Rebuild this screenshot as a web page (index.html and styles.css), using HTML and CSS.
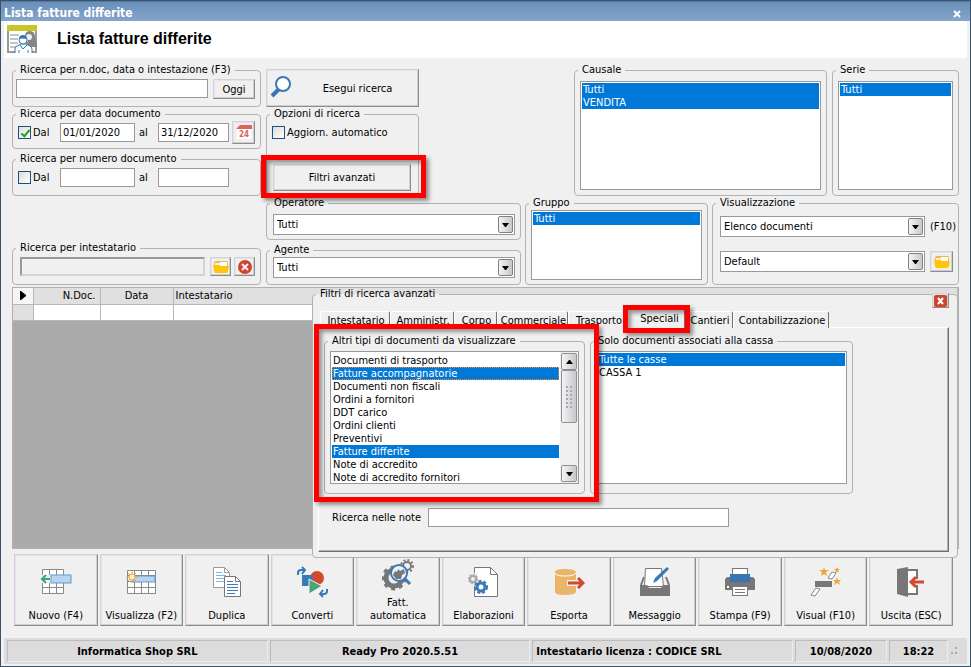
FILE: index.html
```html
<!DOCTYPE html>
<html lang="it">
<head>
    <meta charset="UTF-8">
    <meta name="viewport" content="width=device-width, initial-scale=1.0">
    <title>Lista fatture differite</title>
    <link rel="stylesheet" href="styles.css">
</head>
<body>
    <svg width="0" height="0" class="defs">
        <symbol id="folder" viewBox="0 0 16 14">
            <path fill="#f2b54c" d="M1 4q0-3 2-3h11q1 0 1 3v3H1z"/>
            <path fill="#fff4d8" d="M2 3h12v3H2z"/>
            <path fill="#fff" d="M7 2h7v4H7z"/>
            <path fill="#ffc40c" d="M0 5h6l2 1h8l-1 5q0 2-3 2H4q-3 0-3-2z"/>
        </symbol>
        <symbol id="arrow" viewBox="0 0 7 4">
            <path d="M0 0h7L4 4H3z"/>
        </symbol>
    </svg>

    <div class="window">
        <div class="titlebar">
            <span>Lista fatture differite</span>
            <button type="button" class="close-window" aria-label="Chiudi">
                <svg width="8" height="8" viewBox="0 0 8 8"><path d="M1 1l6 6M7 1L1 7" stroke="#fff" stroke-width="2"/></svg>
            </button>
        </div>
        <div class="header">
            <svg width="30" height="29" viewBox="0 0 30 29">
                <rect x="1" y="1" width="28" height="26" fill="#fff" stroke="#999" stroke-width="2"/>
                <rect width="30" height="6" fill="#c8c72a"/>
                <path d="M3 10h9M3 14h8M3 18h8M3 22h6" stroke="#c4c4c4" stroke-width="2"/>
                <path fill="#858585" d="M18 11q0-5 5-5t5 6q0 3 2 6v4h-8l-3-4 2-2z"/>
                <circle cx="22" cy="12" r="3" fill="#eee"/>
                <path fill="#fff" stroke="#3c78b4" stroke-width="1" d="M8 28v-4q0-3 4-4l2-1h5l2 1q4 1 4 4v4M13 20l3 4 4-4M12 28v-3M21 28v-3"/>
                <ellipse cx="16" cy="15" rx="4" ry="4" fill="#fff" stroke="#3c78b4"/>
                <path fill="#3c78b4" d="M12 14q0-4 4-4t4 4q-4-1-8 0z"/>
            </svg>
            <h1>Lista fatture differite</h1>
        </div>

        <!-- filtri di ricerca -->
        <form class="filters">
            <div class="col-search">
                <fieldset class="search-doc">
                    <legend>Ricerca per n.doc, data o intestazione (F3)</legend>
                    <input type="text" class="grow" aria-label="Ricerca per n.doc, data o intestazione">
                    <button type="button" class="btn btn-today">Oggi</button>
                </fieldset>
                <fieldset class="range range-date">
                    <legend>Ricerca per data documento</legend>
                    <label class="check"><input type="checkbox" checked>Dal</label>
                    <input type="text" class="from" value="01/01/2020" aria-label="Dal giorno">
                    <span>al</span>
                    <input type="text" class="to" value="31/12/2020" aria-label="Al giorno">
                    <button type="button" class="btn btn-calendar" aria-label="Calendario">
                        <svg width="16" height="17" viewBox="0 0 16 17">
                            <path fill="#fff" d="M1 4h14v11H1z"/>
                            <path fill="#d9655c" d="M0 5l4-4h12v4z"/>
                            <text x="8" y="13" text-anchor="middle" class="cal-day">24</text>
                        </svg>
                    </button>
                </fieldset>
                <fieldset class="range range-num">
                    <legend>Ricerca per numero documento</legend>
                    <label class="check"><input type="checkbox">Dal</label>
                    <input type="text" class="from" aria-label="Dal numero">
                    <span>al</span>
                    <input type="text" class="to" aria-label="Al numero">
                </fieldset>
                <fieldset class="search-holder">
                    <legend>Ricerca per intestatario</legend>
                    <input type="text" class="grow sunken" readonly aria-label="Intestatario">
                    <button type="button" class="btn btn-small" aria-label="Apri"><svg width="16" height="14"><use href="#folder"/></svg></button>
                    <button type="button" class="btn btn-small" aria-label="Cancella">
                        <svg width="16" height="16" viewBox="0 0 16 16"><circle cx="8" cy="8" r="7" fill="#d0442e"/><path d="M5 5l6 6M11 5l-6 6" stroke="#f4f4f4" stroke-width="2"/></svg>
                    </button>
                </fieldset>
            </div>

            <div class="col-filters">
                <div class="filters-top">
                    <div class="actions">
                        <button type="button" class="btn btn-search">
                            <svg width="24" height="24" viewBox="0 0 24 24">
                                <path d="M9 13l-7 7" stroke="#3a74b4" stroke-width="4"/>
                                <circle cx="13" cy="8" r="7" fill="#fff" stroke="#3a78b8" stroke-width="2"/>
                            </svg>
                            <span>Esegui ricerca</span>
                        </button>
                        <fieldset class="options">
                            <legend>Opzioni di ricerca</legend>
                            <label class="check"><input type="checkbox">Aggiorn. automatico</label>
                            <div class="advanced">
                                <button type="button" class="btn btn-advanced">Filtri avanzati</button>
                                <div class="mark mark-advanced"></div>
                            </div>
                        </fieldset>
                    </div>
                    <fieldset class="causale">
                        <legend>Causale</legend>
                        <ul class="listbox">
                            <li class="selected">Tutti</li>
                            <li class="selected">VENDITA</li>
                        </ul>
                    </fieldset>
                    <fieldset class="serie">
                        <legend>Serie</legend>
                        <ul class="listbox">
                            <li class="selected">Tutti</li>
                        </ul>
                    </fieldset>
                </div>
                <div class="filters-bottom">
                    <div class="people">
                        <fieldset class="operatore">
                            <legend>Operatore</legend>
                            <div class="combo">
                                <select aria-label="Operatore"><option>Tutti</option></select>
                                <i><svg width="7" height="4"><use href="#arrow"/></svg></i>
                            </div>
                        </fieldset>
                        <fieldset class="agente">
                            <legend>Agente</legend>
                            <div class="combo">
                                <select aria-label="Agente"><option>Tutti</option></select>
                                <i><svg width="7" height="4"><use href="#arrow"/></svg></i>
                            </div>
                        </fieldset>
                    </div>
                    <fieldset class="gruppo">
                        <legend>Gruppo</legend>
                        <ul class="listbox">
                            <li class="selected">Tutti</li>
                        </ul>
                    </fieldset>
                    <fieldset class="vista">
                        <legend>Visualizzazione</legend>
                        <div class="combo">
                            <select id="vista"><option>Elenco documenti</option></select>
                            <i><svg width="7" height="4"><use href="#arrow"/></svg></i>
                        </div>
                        <label for="vista">(F10)</label>
                        <div class="combo">
                            <select aria-label="Modello"><option>Default</option></select>
                            <i><svg width="7" height="4"><use href="#arrow"/></svg></i>
                        </div>
                        <button type="button" class="btn btn-folder" aria-label="Apri"><svg width="16" height="14"><use href="#folder"/></svg></button>
                    </fieldset>
                </div>
            </div>
        </form>

        <!-- elenco documenti -->
        <div class="documents">
            <table>
                <thead>
                    <tr>
                        <th class="c-sel"><svg width="6" height="9" viewBox="0 0 6 9"><path d="M0 0h1l5 4v1L1 9H0z"/></svg></th>
                        <th class="c-num">N.Doc.</th>
                        <th class="c-date">Data</th>
                        <th class="c-name">Intestatario</th>
                    </tr>
                </thead>
                <tbody>
                    <tr><td class="c-sel"></td><td></td><td></td><td></td></tr>
                </tbody>
            </table>

            <!-- filtri avanzati -->
            <fieldset class="panel">
                <legend>Filtri di ricerca avanzati</legend>
                <button type="button" class="btn close-panel" aria-label="Chiudi filtri">
                    <svg width="13" height="12" viewBox="0 0 13 12"><rect width="13" height="12" rx="2" fill="#d0442e"/><path d="M4 3l5 6M9 3L4 9" stroke="#fff" stroke-width="2"/></svg>
                </button>
                <div class="tabs">
                    <button type="button">Intestatario</button>
                    <button type="button">Amministr.</button>
                    <button type="button">Corpo</button>
                    <button type="button">Commerciale</button>
                    <button type="button">Trasporto</button>
                    <button type="button" class="active">Speciali<span class="mark mark-tab"></span></button>
                    <button type="button">Cantieri</button>
                    <button type="button">Contabilizzazione</button>
                </div>
                <div class="pane">
                    <div class="groups">
                        <fieldset class="doc-types">
                            <legend>Altri tipi di documenti da visualizzare</legend>
                            <div class="scrollable">
                                <ul class="listbox">
                                    <li>Documenti di trasporto</li>
                                    <li class="selected focused">Fatture accompagnatorie</li>
                                    <li>Documenti non fiscali</li>
                                    <li>Ordini a fornitori</li>
                                    <li>DDT carico</li>
                                    <li>Ordini clienti</li>
                                    <li>Preventivi</li>
                                    <li class="selected">Fatture differite</li>
                                    <li>Note di accredito</li>
                                    <li>Note di accredito fornitori</li>
                                </ul>
                                <div class="scrollbar">
                                    <i class="up"><svg width="7" height="4"><use href="#arrow"/></svg></i>
                                    <i class="thumb"></i>
                                    <i class="down"><svg width="7" height="4"><use href="#arrow"/></svg></i>
                                </div>
                            </div>
                            <div class="mark mark-types"></div>
                        </fieldset>
                        <fieldset class="casse">
                            <legend>Solo documenti associati alla cassa</legend>
                            <ul class="listbox">
                                <li class="selected">Tutte le casse</li>
                                <li>CASSA 1</li>
                            </ul>
                        </fieldset>
                    </div>
                    <div class="notes">
                        <label for="note">Ricerca nelle note</label>
                        <input type="text" id="note">
                    </div>
                </div>
            </fieldset>
        </div>

        <div class="toolbar">
            <button type="button" class="btn">
                <svg width="32" height="32" viewBox="0 0 32 32">
                    <path fill="#fff" stroke="#8a8a8a" d="M2.500 3.500h21v24h-21zM2.500 9.500h21M2.500 15.500h21M2.500 21.500h21M9.500 3.500v24M16.500 3.500v24"/>
                    <path fill="#f0f0f0" d="M0 9h11v8H0z"/>
                    <rect x="11" y="9" width="20" height="8" fill="#b8d4ee" stroke="#5f9bc8"/>
                    <path d="M10 13H3M6 9l-4 4 4 4" fill="none" stroke="#3aa27c" stroke-width="2"/>
                </svg>
                <span>Nuovo (F4)</span>
            </button>
            <button type="button" class="btn">
                <svg width="32" height="32" viewBox="0 0 32 32">
                    <path fill="#fff" stroke="#8a8a8a" d="M2.500 4.500h28v23h-28zM2.500 9.500h28M2.500 15.500h28M2.500 21.500h28M9.500 4.500v23M16.500 4.500v23M23.500 4.500v23"/>
                    <rect x="8" y="10" width="22" height="6" fill="#b8d4ee" stroke="#5f9bc8"/>
                    <path d="M7 5v12M1 11h12M3 7l8 8M11 7l-8 8" stroke="#efa63c" stroke-width="1"/>
                    <circle cx="7" cy="11" r="3" fill="#fff0c8" stroke="#efa63c"/>
                </svg>
                <span>Visualizza (F2)</span>
            </button>
            <button type="button" class="btn">
                <svg width="32" height="32" viewBox="0 0 32 32">
                    <path fill="#fff" stroke="#999" d="M2.500 1.500h11l5 5v15h-16z"/>
                    <path fill="none" stroke="#999" d="M13.500 1.500v5h5"/>
                    <path d="M5 6.500h6M5 9.500h10M5 12.500h10M5 15.500h10" stroke="#7db6e0"/>
                    <path fill="#fff" stroke="#777" d="M13.500 10.500h11l5 5v15h-16z"/>
                    <path fill="none" stroke="#777" d="M24.500 10.500v5h5"/>
                    <path d="M16 15.500h6M16 18.500h11M16 21.500h11M16 24.500h11M16 27.500h8" stroke="#3a78b8"/>
                </svg>
                <span>Duplica</span>
            </button>
            <button type="button" class="btn">
                <svg width="32" height="32" viewBox="0 0 32 32">
                    <circle cx="21" cy="12" r="7" fill="#d4492e"/>
                    <rect x="6" y="9" width="11" height="11" fill="#3a78b8"/>
                    <path fill="#46a57c" stroke="#f0f0f0" d="M13 13l13 7-13 8z"/>
                    <path d="M2 9V7q0-3 3-3h3M6 1l3 3-3 4M31 23v2q0 3-3 3h-3M27 24l-3 4 3 3" fill="none" stroke="#3a78b8" stroke-width="2"/>
                </svg>
                <span>Converti</span>
            </button>
            <button type="button" class="btn">
                <svg width="32" height="32" viewBox="0 0 32 32">
                    <circle cx="12" cy="19" r="8" fill="none" stroke="#777" stroke-width="5"/>
                    <circle cx="12" cy="19" r="11" fill="none" stroke="#777" stroke-width="3" stroke-dasharray="4 4"/>
                    <circle cx="25" cy="7" r="4" fill="none" stroke="#777" stroke-width="2"/>
                    <circle cx="25" cy="7" r="6" fill="none" stroke="#777" stroke-width="2" stroke-dasharray="2 2"/>
                    <circle cx="17" cy="14" r="8" fill="#eef4fa" stroke="#3a78b8" stroke-width="2"/>
                    <path d="M11 16l2-4 2 1 1-3 2 2 4-2 1 4-3 2-1 4-5 0z" fill="#777"/>
                    <path d="M22 19l6 6" stroke="#3a78b8" stroke-width="3"/>
                </svg>
                <span>Fatt.<br>automatica</span>
            </button>
            <button type="button" class="btn">
                <svg width="32" height="32" viewBox="0 0 32 32">
                    <path fill="#fff" stroke="#777" d="M7.500 1.500h16l7 7v22h-23z"/>
                    <path fill="none" stroke="#777" d="M23.500 1.500v7h7"/>
                    <path fill="#f0f0f0" d="M0 7h11v13H0z"/>
                    <circle cx="6" cy="13" r="3" fill="none" stroke="#aaa" stroke-width="2"/>
                    <circle cx="6" cy="13" r="4" fill="none" stroke="#aaa" stroke-width="2" stroke-dasharray="2 1"/>
                    <circle cx="14" cy="21" r="4" fill="#fff" stroke="#3a78b8" stroke-width="3"/>
                    <circle cx="14" cy="21" r="6" fill="none" stroke="#3a78b8" stroke-width="2" stroke-dasharray="3 2"/>
                </svg>
                <span>Elaborazioni</span>
            </button>
            <button type="button" class="btn">
                <svg width="32" height="32" viewBox="0 0 32 32">
                    <path fill="#eab566" d="M2 6q0-3 10-3t11 3v20q-1 3-11 3T2 26z"/>
                    <path d="M2 7q1 3 10 3t11-3" fill="none" stroke="#fff"/>
                    <path d="M14 17h14" stroke="#f0f0f0" stroke-width="6"/>
                    <path d="M15 17h15M25 12l5 5-5 5" fill="none" stroke="#d4492e" stroke-width="3"/>
                </svg>
                <span>Esporta</span>
            </button>
            <button type="button" class="btn">
                <svg width="32" height="32" viewBox="0 0 32 32">
                    <path fill="none" stroke="#777" stroke-width="2" d="M5 11L2 19M27 11l3 8"/>
                    <path fill="#fff" stroke="#777" d="M6.500 2.500h16l2 18h-19z"/>
                    <path fill="#777" d="M1 19h7l2 3h12l2-3h7v11H1z"/>
                    <path d="M14 17l2-5L28 1l2 2-12 12z" fill="#3a78b8"/>
                </svg>
                <span>Messaggio</span>
            </button>
            <button type="button" class="btn">
                <svg width="32" height="32" viewBox="0 0 32 32">
                    <rect x="8.500" y="2.500" width="15" height="8" fill="#fff" stroke="#777"/>
                    <path fill="#777" d="M3 11h26l2 2v11H1V13z"/>
                    <rect x="6" y="8" width="20" height="8" fill="#3a74b4"/>
                    <rect x="8.500" y="20.500" width="15" height="9" fill="#fff" stroke="#777"/>
                    <path d="M11 23.500h10M11 26.500h10" stroke="#777"/>
                    <path fill="#fff" d="M3 20h2v2H3z"/>
                </svg>
                <span>Stampa (F9)</span>
            </button>
            <button type="button" class="btn">
                <svg width="32" height="32" viewBox="0 0 32 32">
                    <path fill="#efa63c" d="M14 1l1 3h4l-3 2 1 4-3-2-3 2 1-4-3-2h4zM27 1l1 2h2l-2 2 1 2-2-1-2 1 1-2-2-2h2zM27 11l1 3h3l-2 2 1 3-3-2-3 2 1-3-2-2h3z"/>
                    <path d="M18 12l4-6 4 1-4 6zM1 29l5-7 4 1-5 7z" fill="#fff" stroke="#888"/>
                    <path fill="#777" d="M5 15h17v6H5z"/>
                </svg>
                <span>Visual (F10)</span>
            </button>
            <button type="button" class="btn">
                <svg width="32" height="32" viewBox="0 0 32 32">
                    <rect x="11" y="4" width="11" height="24" fill="#fff" stroke="#777" stroke-width="2"/>
                    <path fill="#777" d="M2 3l11-2v30L2 28z"/>
                    <path d="M17 16h12" stroke="#f0f0f0" stroke-width="6"/>
                    <path d="M29 16H17M21 11l-5 5 5 5" fill="none" stroke="#d4492e" stroke-width="3"/>
                </svg>
                <span>Uscita (ESC)</span>
            </button>
        </div>

        <div class="statusbar">
            <div class="wide center">Informatica Shop SRL</div>
            <div class="wide center">Ready Pro 2020.5.51</div>
            <div class="wide">Intestatario licenza : CODICE SRL</div>
            <div class="date center">10/08/2020</div>
            <div class="time center">18:22</div>
            <svg width="8" height="8" viewBox="0 0 8 8"><path fill="#aaa" d="M5 0h2v2H5zM5 5h2v2H5zM1 5h2v2H1z"/></svg>
        </div>
    </div>
</body>
</html>
```

FILE: styles.css
```css
* {
    box-sizing: border-box;
    margin: 0;
    padding: 0;
}
body, button, input, select {
    font-family: "DejaVu Sans Condensed", "DejaVu Sans", sans-serif;
    font-size: 11px;
    line-height: 13px;
    color: #000;
}
.defs {
    position: absolute;
}
svg {
    display: block;
    flex: none;
}
ul {
    list-style: none;
}
.window {
    display: flex;
    flex-direction: column;
    min-width: 960px;
    min-height: 100vh;
    padding-bottom: 2px;
    border: 1px solid #3c5068;
    background: #f0f0f0;
}

/* titolo */
.titlebar {
    display: flex;
    align-items: center;
    justify-content: space-between;
    height: 20px;
    padding: 4px 9px 0 3px;
    border-top: 1px solid #557aa6;
    background: linear-gradient(#688fba, #85a5ca);
    color: #fff;
    font-size: 12px;
    font-weight: 700;
}
.close-window {
    border: 0;
    background: none;
}
.header {
    display: flex;
    align-items: center;
    gap: 20px;
    height: 37px;
    margin: 0 3px;
    padding: 0 3px;
    background: #fff;
}
.header h1 {
    padding-bottom: 2px;
    font-family: "Liberation Sans", Arial, sans-serif;
    font-size: 16px;
    font-weight: 700;
    line-height: 20px;
}

/* controlli */
fieldset {
    --inset: 5px;
    display: flex;
    min-width: 0;
    padding-left: var(--inset);
    border: 1px solid #b2b2b2;
    border-radius: 4px;
}
/* il titolo resta allineato qualunque sia il rientro del riquadro */
legend {
    height: 14px;
    margin-left: calc(3px - var(--inset));
    padding: 0 4px;
    line-height: 14px;
    white-space: nowrap;
}
input[type="text"] {
    min-width: 0;
    height: 19px;
    padding: 0 2px;
    border: 1px solid #999;
    background: #fff;
}
input.grow {
    flex: 1;
}
input.sunken {
    border: 2px solid;
    border-color: #999 #d4d4d4 #d4d4d4 #999;
    background: #f0f0f0;
}
.check {
    display: flex;
    align-items: center;
    gap: 2px;
}
input[type="checkbox"] {
    appearance: none;
    position: relative;
    width: 13px;
    height: 13px;
    border: 1px solid #1c5180;
    background: linear-gradient(135deg, #dcdcd7, #fff);
}
input[type="checkbox"]:checked::after {
    content: "";
    position: absolute;
    left: 4px;
    top: 1px;
    width: 3px;
    height: 7px;
    border: solid #21a121;
    border-width: 0 2px 2px 0;
    transform: rotate(40deg);
}
.btn {
    display: flex;
    align-items: center;
    justify-content: center;
    border: 1px solid;
    border-color: #d2d2d8 #8c8c8c #8c8c8c #d2d2d8;
    background: #f0f0f0;
    box-shadow: inset -1px -1px #cfcfcf, inset 1px 1px #e4e4e8;
}
.combo {
    position: relative;
    width: 100%;
    height: 21px;
}
.combo select {
    appearance: none;
    width: 100%;
    height: 21px;
    padding: 0 20px 0 3px;
    border: 1px solid #999;
    border-radius: 0;
    background: #fff;
}
.combo i {
    position: absolute;
    top: 2px;
    right: 2px;
    display: flex;
    align-items: center;
    justify-content: center;
    width: 15px;
    height: 17px;
    border: 1px solid #808084;
    border-radius: 2px;
    background: linear-gradient(90deg, #f4f4f4, #c8c8cc);
    pointer-events: none;
}
.listbox {
    flex: 1;
    padding: 1px;
    border: 1px solid #999;
    background: #fff;
}
.listbox li {
    height: 13px;
    padding-left: 1px;
    line-height: 14px;
    white-space: nowrap;
}
.listbox .selected {
    background: #0078d7;
    color: #fff;
}
.listbox .focused {
    outline: 1px dotted #ff8728;
    outline-offset: -1px;
}

/* riquadri rossi di evidenza */
.mark {
    position: absolute;
    z-index: 3;
    border: 5px solid #f00;
    box-shadow: 3px 3px 4px rgba(0, 0, 0, .4), inset 3px 3px 4px rgba(0, 0, 0, .4);
    pointer-events: none;
}
.mark-advanced {
    inset: -9px -15px -7px -11px;
}
.mark-tab {
    inset: -5px -6px -5px -6px;
}
.mark-types {
    inset: -24px -15px -9px -11px;
}

/* filtri */
.filters {
    display: flex;
    gap: 5px;
    padding: 5px 11px 0 11px;
}
.col-search {
    display: flex;
    flex-direction: column;
    width: 249px;
}
.search-doc {
    --inset: 3px;
    gap: 5px;
    height: 44px;
    padding-top: 2px;
    padding-right: 5px;
}
.btn-today {
    width: 42px;
    height: 20px;
}
.range {
    align-items: center;
    padding-right: 5px;
}
.range-date {
    height: 42px;
    padding-bottom: 3px;
}
.range-num {
    align-items: flex-start;
    height: 44px;
    margin-top: 3px;
    padding-top: 2px;
}
.range-num .check, .range-num span {
    padding-top: 3px;
}
.range .check {
    width: 42px;
}
.range .from {
    width: 75px;
}
.range .to {
    width: 71px;
}
.range span {
    width: 23px;
    padding-left: 4px;
}
.btn-calendar {
    width: 23px;
    height: 23px;
    margin-left: 3px;
}
.cal-day {
    font: bold 8px "DejaVu Sans Condensed", sans-serif;
    fill: #d9655c;
}
.search-holder {
    --inset: 7px;
    gap: 3px;
    height: 44px;
    margin-top: auto;
    padding-top: 2px;
    padding-right: 5px;
}
.search-holder .grow {
    margin-right: 2px;
}
.btn-small {
    width: 21px;
    height: 19px;
}
.col-filters {
    flex: 1;
}
.filters-top {
    display: flex;
    gap: 5px;
    height: 133px;
}
.actions {
    display: flex;
    flex-direction: column;
    width: 153px;
    margin-right: auto;
    padding-top: 6px;
}
.btn-search {
    height: 38px;
    padding-left: 3px;
}
.btn-search span {
    flex: 1;
    padding-left: 3px;
}
.options {
    flex: 1;
    flex-direction: column;
    justify-content: space-between;
    padding-top: 5px;
    padding-right: 7px;
    padding-bottom: 4px;
}
.advanced {
    position: relative;
    padding-left: 1px;
}
.btn-advanced {
    width: 100%;
    height: 27px;
}
.causale, .serie {
    padding-top: 4px;
    padding-right: 5px;
    padding-bottom: 5px;
}
.causale {
    width: 253px;
}
.serie {
    width: 127px;
}
.filters-bottom {
    display: grid;
    grid-template-columns: 255fr 183fr 247fr;
    gap: 4px;
    height: 89px;
}
.people {
    display: flex;
    flex-direction: column;
    justify-content: space-between;
    min-width: 0;
}
.operatore, .agente {
    --inset: 6px;
    padding-right: 5px;
}
.operatore {
    height: 44px;
    padding-top: 4px;
}
.agente {
    height: 42px;
}
.gruppo {
    padding-right: 5px;
    padding-bottom: 4px;
}
.vista {
    --inset: 7px;
    display: grid;
    grid-template-columns: 1fr 24px;
    gap: 14px 5px;
    align-content: start;
    align-items: center;
    padding-top: 6px;
    padding-right: 4px;
}
.btn-folder {
    width: 23px;
    height: 21px;
}

/* elenco */
.documents {
    position: relative;
    flex: 1;
    min-height: 262px;
    margin: 2px 11px 0 11px;
    border: 1px solid #b0b0b0;
    background: #ababab;
}
.documents table {
    width: 100%;
    table-layout: fixed;
    border-collapse: collapse;
}
.documents th, .documents td {
    height: 16px;
    border-right: 1px solid #b8b8b8;
    border-bottom: 1px solid #b8b8b8;
    font-weight: 400;
    line-height: 15px;
}
.documents th {
    background: #e0e0e0;
}
.documents td {
    background: #fff;
}
.documents .c-sel {
    width: 20px;
    background: #e0e0e0;
}
.documents th.c-sel {
    background: #f6f6f6;
}
.c-sel svg {
    margin: 0 auto;
}
.c-num {
    width: 67px;
    padding-right: 4px;
    text-align: right;
}
.c-date {
    width: 73px;
}
.documents .c-name {
    padding-left: 2px;
    text-align: left;
}

/* pannello dei filtri avanzati, sopra l'elenco */
.panel {
    position: absolute;
    z-index: 1;
    top: -1px;
    right: 0;
    bottom: -10px;
    left: 299px;
    flex-direction: column;
    padding-top: 8px;
    padding-right: 8px;
    padding-bottom: 5px;
    background: #f0f0f0;
}
.close-panel {
    position: absolute;
    top: -8px;
    right: 8px;
    width: 17px;
    height: 15px;
}
.tabs {
    display: grid;
    grid-template-columns: 70px 64px 43px 71px 60px 57px 48px 96px;
    align-items: end;
    height: 18px;
    padding-left: 2px;
}
.tabs button {
    position: relative;
    height: 17px;
    padding: 2px 0 1px 2px;
    border: 1px solid;
    border-color: #fff #707070 transparent #fff;
    border-bottom: 0;
    border-radius: 3px 2px 0 0;
    background: #f0f0f0;
    text-align: center;
    white-space: nowrap;
}
.tabs .active {
    z-index: 2;
    height: 19px;
    padding: 2px 0 3px 6px;
}
.pane {
    flex: 1;
    padding: 6px 5px 5px 5px;
    border: 1px solid;
    border-color: #fff #707070 #707070 #fff;
    box-shadow: inset -1px -1px #b0b0b0;
}
.groups {
    display: flex;
    gap: 5px;
}
.groups fieldset {
    position: relative;
    height: 160px;
    padding-top: 3px;
    padding-right: 5px;
    padding-bottom: 9px;
}
.groups .doc-types {
    z-index: 2;
    width: 261px;
}
.groups .casse {
    width: 263px;
}
.scrollable {
    display: flex;
    flex: 1;
    border: 1px solid #999;
    background: #fff;
}
.scrollable .listbox {
    border: 0;
    padding: 2px 1px;
}
.scrollbar {
    display: flex;
    flex-direction: column;
    width: 18px;
    padding: 1px;
    background: #f0f0f0;
}
.scrollbar i {
    display: flex;
    align-items: center;
    justify-content: center;
    height: 17px;
    border: 1px solid #909094;
    border-radius: 2px;
    background: linear-gradient(90deg, #f4f4f4, #c8c8cc);
}
.scrollbar .up svg {
    transform: rotate(180deg);
}
.scrollbar .thumb {
    height: 53px;
}
.scrollbar .thumb::before {
    content: "";
    width: 6px;
    height: 22px;
    background-image: radial-gradient(circle at 1px 1px, #a8a8ac 1px, transparent 1px);
    background-size: 4px 4px;
}
.scrollbar .down {
    margin-top: auto;
}
.notes {
    display: flex;
    align-items: center;
    gap: 7px;
    margin-top: 14px;
    padding-left: 8px;
}
.notes input {
    width: 301px;
}

/* barra dei comandi */
.toolbar {
    display: grid;
    grid-template-columns: repeat(11, 1fr);
    gap: 2px;
    height: 72px;
    margin: 5px 17px 0 13px;
}
.toolbar .btn {
    flex-direction: column;
    justify-content: flex-end;
    gap: 11px;
    min-width: 0;
    padding-bottom: 3px;
    white-space: nowrap;
}
.toolbar .btn:nth-child(5) {
    gap: 5px;
}

/* barra di stato */
.statusbar {
    display: flex;
    gap: 2px;
    margin: 12px 3px 0 3px;
    padding: 2px 9px 2px 3px;
    background: #dcdcdc;
    font-weight: 700;
}
.statusbar div {
    height: 22px;
    padding: 0 3px;
    border: 1px solid;
    border-color: #bcbcbc #ececec #ececec #bcbcbc;
    line-height: 22px;
}
.statusbar .wide {
    flex: 1;
}
.statusbar .date {
    width: 92px;
}
.statusbar .time {
    width: 59px;
}
.statusbar .center {
    text-align: center;
}
.statusbar svg {
    align-self: center;
}
```
